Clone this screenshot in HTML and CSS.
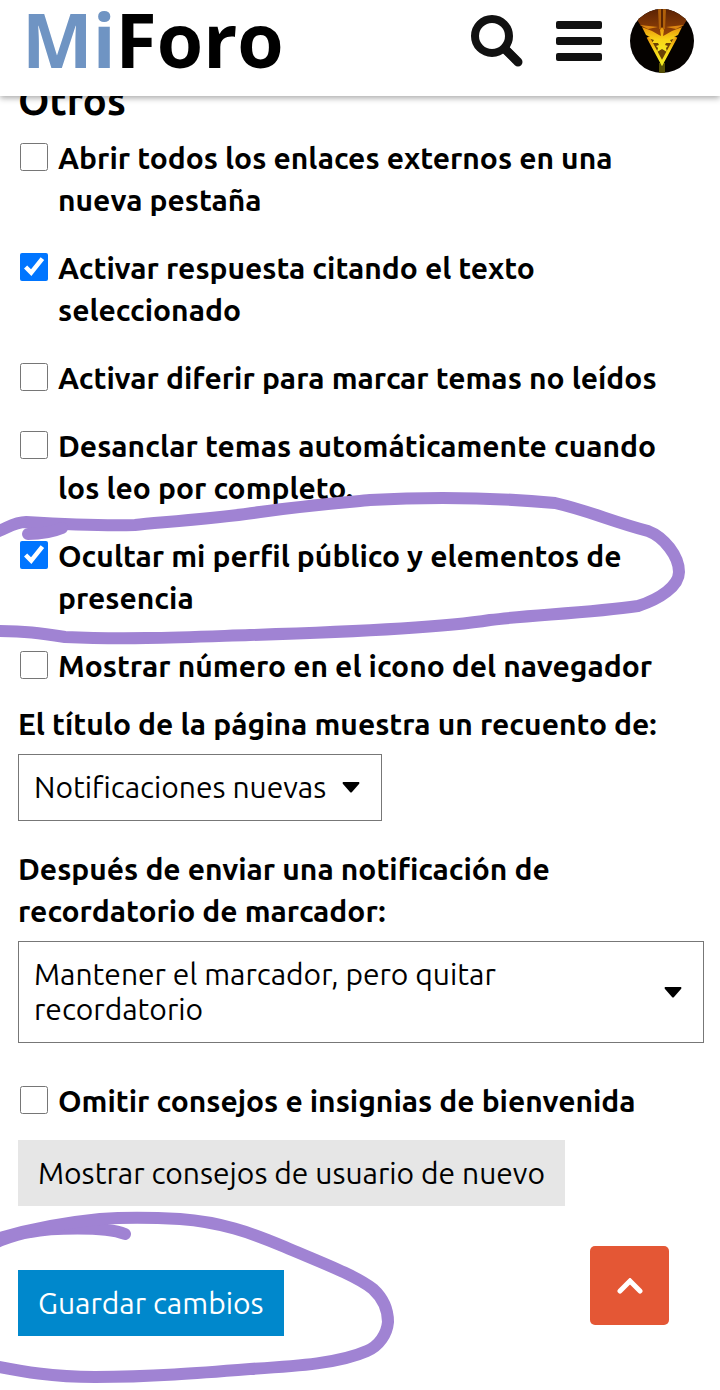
FILE: index.html
```
<!DOCTYPE html>
<html lang="es">
  <head>
    <meta charset="utf-8">
    <meta name="viewport" content="width=device-width, initial-scale=1">
    <title>MiForo</title>
    <link rel="stylesheet" href="styles.css">
  </head>
  <body>
    <header class="header">
      <a class="logo" href="#"><span class="logo-mi">Mi</span>Foro</a>
      <nav class="header-icons">
        <button class="icon-button" type="button" aria-label="Buscar">
          <svg width="58" height="54" viewBox="0 0 58 54" fill="none" stroke="#111">
            <circle cx="22" cy="22" r="17" stroke-width="8"/>
            <path d="M36 36L48 48" stroke-width="9" stroke-linecap="round"/>
            <path d="M34 34L46 46" stroke-width="8"/>
          </svg>
        </button>
        <button class="icon-button" type="button" aria-label="Menú">
          <svg width="46" height="42" viewBox="0 0 46 42" fill="#111">
            <rect y="1" width="46" height="8" rx="2"/>
            <rect y="17" width="46" height="8" rx="2"/>
            <rect y="33" width="46" height="8" rx="2"/>
          </svg>
        </button>
        <button class="icon-button" type="button" aria-label="Perfil">
          <svg width="64" height="64" viewBox="0 0 64 64">
            <defs>
              <linearGradient id="glow" x1="0" y1="0" x2="0" y2="1">
                <stop offset="0" stop-color="#5a2204"/>
                <stop offset="1" stop-color="#a04a08"/>
              </linearGradient>
              <linearGradient id="gold" x1="0" y1="0" x2="0" y2="1">
                <stop offset="0" stop-color="#e8920c"/>
                <stop offset="0.5" stop-color="#f8d416"/>
                <stop offset="1" stop-color="#f3ea22"/>
              </linearGradient>
              <clipPath id="round"><circle cx="32" cy="32" r="32"/></clipPath>
            </defs>
            <g clip-path="url(#round)">
              <rect width="64" height="64" fill="#050200"/>
              <path d="M0 0H64L53 17L32 30L11 17Z" fill="url(#glow)"/>
              <path d="M28 0H36L35 20H29Z" fill="#b0600a"/>
              <path d="M31 0H33V20H31Z" fill="#5a2503"/>
              <path d="M29 54H35V64H29Z" fill="#565005"/>
              <path d="M10 16L28 18L18 20ZM54 16L36 18L46 20Z" fill="#dc8510"/>
              <path d="M18 28L32 54L46 28" fill="#6b4204" stroke="url(#gold)" stroke-width="3"/>
              <path d="M12 18L22 22L29 26L31 27L30 21L32 18L34 21L33 27L35 26L42 22L52 18L48 26L44 28L46 29L40 31L42 34L36 34L35 36L38 37L36 39L37 43L32 40L27 43L28 39L26 37L29 36L28 34L22 34L24 31L18 29L20 28L16 26Z" fill="url(#gold)"/>
            </g>
          </svg>
        </button>
      </nav>
    </header>

    <main class="preferences">
      <h2 class="section-title">Otros</h2>
      <form>
        <div class="checks">
          <label class="check"><input type="checkbox"><span>Abrir todos los enlaces externos en una nueva pestaña</span></label>
          <label class="check"><input type="checkbox" checked><span>Activar respuesta citando el texto seleccionado</span></label>
          <label class="check"><input type="checkbox"><span>Activar diferir para marcar temas no leídos</span></label>
          <label class="check"><input type="checkbox"><span>Desanclar temas automáticamente cuando los leo por completo.</span></label>
          <label class="check"><input type="checkbox" checked><span>Ocultar mi perfil público y elementos de presencia</span></label>
          <label class="check"><input type="checkbox"><span>Mostrar número en el icono del navegador</span></label>
        </div>

        <div class="field">
          <label class="field-label" for="title-count">El título de la página muestra un recuento de:</label>
          <div class="dropdown">
            <select id="title-count">
              <option>Notificaciones nuevas</option>
            </select>
            <svg class="caret" width="18" height="11" viewBox="0 0 18 11"><path d="M1 0H17Q18 1 17 2L10 10Q9 11 8 10L1 2Q0 1 1 0Z"/></svg>
          </div>
        </div>

        <div class="field">
          <label class="field-label" for="bookmark">Después de enviar una notificación de recordatorio de marcador:</label>
          <div class="dropdown dropdown-wide">
            <select id="bookmark">
              <option>Mantener el marcador, pero quitar recordatorio</option>
            </select>
            <svg class="caret" width="18" height="11" viewBox="0 0 18 11"><path d="M1 0H17Q18 1 17 2L10 10Q9 11 8 10L1 2Q0 1 1 0Z"/></svg>
          </div>
        </div>

        <label class="check"><input type="checkbox"><span>Omitir consejos e insignias de bienvenida</span></label>
        <div class="actions">
          <button class="btn" type="button">Mostrar consejos de usuario de nuevo</button>
          <button class="btn btn-primary" type="submit">Guardar cambios</button>
        </div>
      </form>
    </main>

    <a class="to-top" href="#" aria-label="Subir">
      <svg width="26" height="16" viewBox="0 0 26 16" fill="none" stroke="#fff" stroke-width="5" stroke-linecap="round"><path d="M3 13L13 3L23 13"/></svg>
    </a>

    <!-- hand drawn marks -->
    <svg class="marks" width="720" height="1390" viewBox="0 0 720 1390" fill="none" stroke="#a083d3" stroke-width="12" stroke-linecap="round" stroke-linejoin="round">
      <path d="M-6 533C8 528 14 522 26 522C60 524 100 526 135 525C165 522 220 518 260 512C310 505 350 502 370 500C440 496 500 498 555 503C590 511 610 521 648 531C664 537 679 556 679 572C679 586 660 599 638 606C590 613 530 615 490 620C440 628 350 632 250 635C190 637 130 640 65 637C40 633 25 631 -6 631"/>
      <path d="M28 534C40 534 50 533 62 528"/>
      <path d="M125 1234C105 1226 50 1228 30 1232C15 1234 5 1239 -6 1243"/>
      <path d="M-6 1240C25 1230 60 1223 100 1219C130 1217 160 1218 180 1219C220 1222 250 1232 285 1247C320 1262 355 1275 373 1289C386 1301 388 1315 388 1322C387 1334 379 1346 367 1351C340 1363 300 1366 250 1369C200 1373 150 1377 95 1377C50 1377 20 1371 -6 1366"/>
    </svg>
  </body>
</html>
```
FILE: styles.css
```
* {
  box-sizing: border-box;
}
body {
  margin: 0;
  position: relative;
  overflow-x: hidden;
  background: #fff;
  color: #000;
  font-family: Ubuntu, "Noto Sans", sans-serif;
  font-size: 30px;
}
.header {
  position: sticky;
  top: 0;
  z-index: 2;
  display: flex;
  justify-content: space-between;
  height: 96px;
  padding: 0 26px 14px 22px;
  align-items: center;
  background: #fff;
  box-shadow: 0 2px 6px rgba(0, 0, 0, 0.35);
}
.logo {
  padding-bottom: 4px;
  color: #000;
  font-family: "Open Sans", sans-serif;
  font-size: 75px;
  font-weight: bold;
  line-height: 78px;
  text-decoration: none;
}
.logo-mi {
  color: #6f94c3;
}
.header-icons {
  display: flex;
  align-items: center;
  gap: 28px;
}
.icon-button {
  display: flex;
  padding: 0;
  border: none;
  background: none;
  cursor: pointer;
}
.preferences {
  padding: 0 16px 56px 18px;
}
.section-title {
  margin: -19px 0 12px;
  font-size: 40px;
  line-height: 48px;
}
.checks {
  display: flex;
  flex-direction: column;
  gap: 26px;
  margin-bottom: 16px;
}
.check {
  display: flex;
  align-items: flex-start;
  gap: 10px;
  padding-left: 2px;
  font-weight: bold;
  line-height: 42px;
}
.check input {
  flex: none;
  width: 28px;
  height: 28px;
  margin: 6px 0 0;
}
.field {
  margin-bottom: 27px;
}
.field-label {
  display: block;
  margin-bottom: 9px;
  font-weight: bold;
  line-height: 42px;
}
.dropdown {
  display: inline-grid;
  vertical-align: top;
  align-items: center;
}
.dropdown-wide {
  display: grid;
  margin-bottom: 37px;
}
.dropdown select {
  grid-area: 1 / 1;
  appearance: none;
  min-height: 66px;
  width: 100%;
  padding: 15px 54px 15px 15px;
  border: 1px solid #777;
  border-radius: 0;
  background: #fff;
  color: #000;
  font: inherit;
  line-height: 35px;
  white-space: normal;
}
.dropdown-wide select {
  padding-right: 160px;
}
.caret {
  grid-area: 1 / 1;
  justify-self: end;
  margin-right: 22px;
  pointer-events: none;
}
.actions {
  display: flex;
  flex-direction: column;
  align-items: flex-start;
  gap: 64px;
  margin-top: 18px;
}
.btn {
  padding: 12px 20px;
  border: none;
  background: #e6e6e6;
  color: #000;
  font: inherit;
  line-height: 42px;
  cursor: pointer;
}
.btn-primary {
  background: #0088cc;
  color: #fff;
}
.to-top {
  position: fixed;
  right: 51px;
  bottom: 65px;
  display: flex;
  align-items: center;
  justify-content: center;
  width: 79px;
  height: 79px;
  border-radius: 5px;
  background: #e45735;
}
.marks {
  position: absolute;
  top: 0;
  left: 0;
  pointer-events: none;
}
```
